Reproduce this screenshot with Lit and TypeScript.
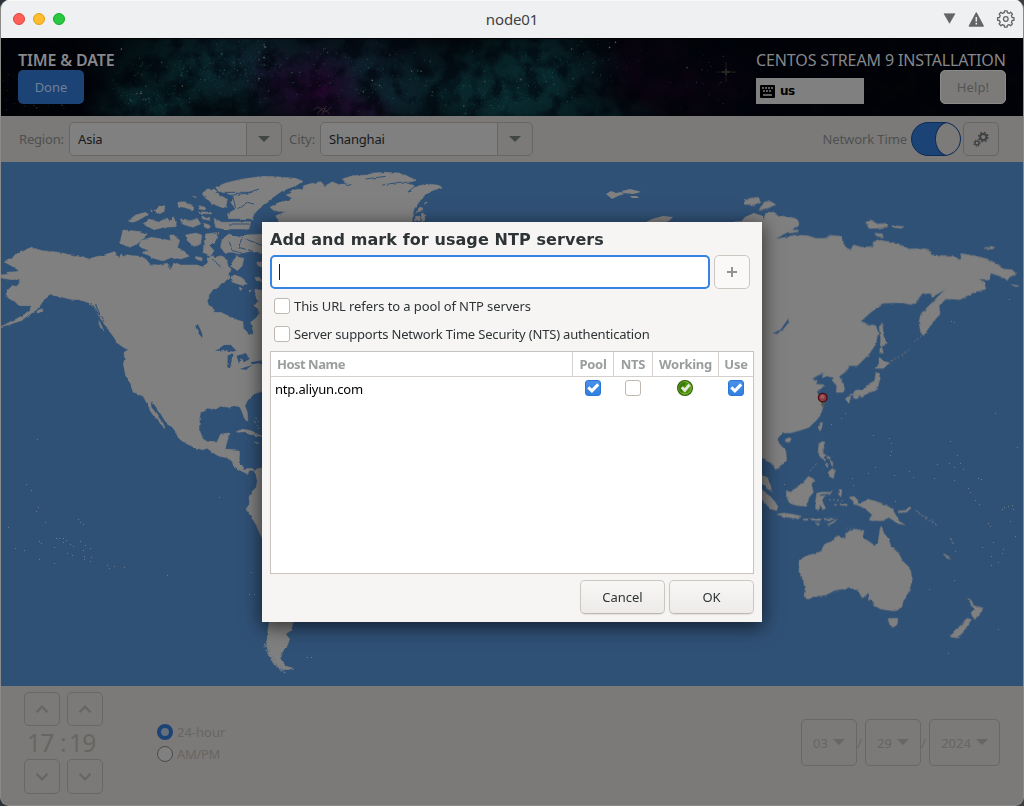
import { LitElement, html, css, svg } from "lit";
import { customElement } from "lit/decorators.js";

/* Deterministic generator used for scattering stars and islets. */
function seeded(seed: number) {
  return () => {
    seed = (seed + 0x6d2b79f5) | 0;
    let t = Math.imul(seed ^ (seed >>> 15), 1 | seed);
    t = (t + Math.imul(t ^ (t >>> 7), 61 | t)) ^ t;
    return ((t ^ (t >>> 14)) >>> 0) / 4294967296;
  };
}

type Star = { x: number; y: number; r: number; c: string; o: number };

const CLUSTERS = [
  [40, 60, 50, 30, 40], [160, 35, 60, 35, 70], [215, 35, 65, 38, 150], [262, 25, 25, 25, 70],
  [150, 62, 40, 14, 60], [325, 30, 70, 38, 90], [400, 32, 40, 25, 60], [370, 55, 30, 20, 40],
  [440, 55, 60, 24, 50], [530, 40, 70, 40, 130], [500, 60, 60, 20, 70], [600, 20, 50, 30, 35],
  [700, 45, 50, 34, 22],
];

function makeStars(): Star[] {
  const rnd = seeded(77);
  const out: Star[] = [];
  for (const [cx, cy, rx, ry, n] of CLUSTERS) {
    for (let i = 0; i < n; i++) {
      const x = cx + (rnd() + rnd() - 1) * rx;
      const y = cy + (rnd() + rnd() - 1) * ry;
      if (y < 1 || y > 77) continue;
      const k = rnd();
      out.push({
        x, y,
        r: k > 0.93 ? 0.8 : 0.5,
        c: k > 0.96 ? "#7f7864" : k > 0.6 ? "#2c6a6e" : "#1a4650",
        o: 0.25 + rnd() * 0.6,
      });
    }
  }
  return out;
}
const STARS = makeStars();

@customElement("star-field")
class StarField extends LitElement {
  static styles = css`
    :host { display: block; width: 100%; height: 100%; }
    svg { display: block; width: 100%; height: 100%; }
  `;
  render() {
    const glow = (x: number, y: number, rx: number, ry: number, c: string, o: number) =>
      svg`<ellipse cx=${x} cy=${y} rx=${rx} ry=${ry} fill=${`url(#${c})`} opacity=${o}></ellipse>`;
    return html`<svg viewBox="0 0 1022 78" preserveAspectRatio="none">
      <defs>
        <radialGradient id="teal"><stop offset="0" stop-color="#0a3035"/><stop offset="1" stop-color="#0a3035" stop-opacity="0"/></radialGradient>
        <radialGradient id="blue"><stop offset="0" stop-color="#0e222e"/><stop offset="1" stop-color="#0e222e" stop-opacity="0"/></radialGradient>
        <radialGradient id="plum"><stop offset="0" stop-color="#22062a"/><stop offset="1" stop-color="#22062a" stop-opacity="0"/></radialGradient>
        <filter id="cloud" x="0" y="0" width="1" height="1" color-interpolation-filters="sRGB">
          <feTurbulence type="fractalNoise" baseFrequency=".05" numOctaves="6" seed="8"/>
          <feColorMatrix values="0 0 0 0 0  0 0 0 0 .01  0 0 0 0 .04  3.4 0 0 0 -1.35"/>
        </filter>
      </defs>
      <rect width="1022" height="78" fill="#010307"/>
      ${glow(205, 34, 125, 75, "teal", 0.8)}
      ${glow(140, 66, 60, 28, "teal", 0.8)}
      ${glow(250, 20, 70, 55, "blue", 0.8)}
      ${glow(360, 35, 120, 70, "blue", 1)}
      ${glow(385, 62, 60, 26, "blue", 0.9)}
      ${glow(460, 50, 90, 50, "teal", 0.7)}
      ${glow(535, 40, 95, 75, "teal", 1)}
      ${glow(500, 70, 80, 35, "teal", 0.6)}
      ${glow(318, 52, 50, 48, "plum", 1)}
      ${glow(275, 45, 32, 42, "plum", 0.6)}
      ${glow(360, 70, 36, 16, "plum", 0.7)}
      ${glow(640, 30, 60, 70, "plum", 0.3)}
      ${glow(705, 50, 75, 50, "plum", 0.25)}
      ${glow(600, 76, 70, 20, "teal", 0.5)}
      <rect width="1022" height="78" filter="url(#cloud)" opacity=".6"/>
      ${STARS.map((s) => svg`<circle cx=${s.x.toFixed(1)} cy=${s.y.toFixed(1)} r=${s.r} fill=${s.c} opacity=${s.o.toFixed(2)}></circle>`)}
      <path d="M312 72q6-5 9 0t9-3M316 76l6-6 7 6M325 68l-4 9" stroke="#4b3f38" stroke-width="1" fill="none" opacity=".55"/>
      <path d="M715 34h20M725 24v20" stroke="#2c3328" stroke-width="1" opacity=".5"/>
      <path d="M721 34h8M725 31v6" stroke="#2c3328" stroke-width="2" opacity=".7"/>
      <rect width="1022" height="1" fill="#000"/>
    </svg>`;
  }
}

const LAND_AMERICA = [
  /* North America down to Panama and the north-west of South America */
  `M15 308L28 300 38 300 50 285 65 275 85 270 97 265 112 270 130 275 165 278 190 282 210 287 240 290 270 300 290 293 310 290 330 283 345 278 352 290 362 293 366 283 372 293 385 287 400 290 425 292 440 300 455 317 480 318 505 313 517 330 525 310 545 318 600 318 612 327 615 318 628 310 622 298 640 290 650 295 665 290 680 300 690 325 697 330 688 345 690 358 665 375 655 385 645 388 630 408 625 425 628 438 640 445 645 460 665 460 690 472 715 483 732 488 733 508 750 525 760 527 760 505 755 490 770 478 780 465 778 450 765 440 775 425 768 405 768 390 800 395 810 690 780 700 765 705 745 725 738 740 745 760 747 785 742 786 735 775 728 755 722 743 705 740 690 745 665 742 650 750 625 748 605 760 602 775 600 810 612 840 625 848 655 847 665 825 690 822 685 845 678 870 710 872 722 878 720 910 733 930 755 928 768 932 790 925 810 925 810 1180 786 1130 770 1095 755 1070 742 1053 742 1040 752 1030 750 1015 755 1002 772 985 775 965 770 945 765 935 752 933 745 945 735 940 720 932 703 920 700 908 688 897 660 892 640 880 625 868 612 872 590 867 560 853 537 838 533 822 520 805 500 788 485 765 470 742 455 726 457 745 472 765 482 780 492 792 497 806 485 795 475 778 462 768 450 745 437 720 425 708 405 700 392 675 380 650 373 615 377 600 375 580 388 572 375 555 345 535 330 515 318 495 305 480 295 460 280 440 265 430 240 422 210 420 180 412 165 410 155 405 140 415 130 430 115 450 95 465 65 485 30 497 5 503 35 488 70 470 90 455 98 440 60 440 50 430 40 425 25 415 18 405 28 388 40 380 52 382 60 375 62 360 40 362 10 358 3 348 30 345 20 340 50 338 60 335 45 325Z`,
  `M345 535l18 8 18 14 8 15-14-6-20-14zM300 485l8 16 6 14-10-10-4-12zM115 455l12-6 6 4-12 8-8 0z`,
  /* Canadian arctic islands */
  `M372 213L400 215 425 218 445 225 430 240 415 255 390 265 362 252Z`,
  `M425 245L455 235 490 240 515 245 512 228 528 228 542 245 535 265 560 280 570 292 545 300 520 295 490 305 460 297 430 280 450 274 430 268 420 260Z`,
  `M388 185L410 168 440 160 445 168 415 185 400 190ZM432 195L450 180 480 190 500 175 510 188 522 173 532 188 530 203 495 205 465 212ZM465 155L480 142 498 140 495 155 475 163ZM535 130L555 128 585 142 580 153 555 145 540 143ZM543 178L575 185 595 178 605 195 580 205 550 195Z`,
  `M560 228L590 222 608 228 605 255 585 262 565 245ZM620 225L660 220 650 245 630 258 645 275 635 290 612 280 615 255ZM597 140L620 145 618 153 600 150ZM645 178L665 190 755 188 750 210 670 210 650 205ZM608 172l25 4-2 8-20-4zM612 192l20 6-4 12-14-8zM590 292l20 6-2 8-18-6zM455 150l6 2-4 4zM580 112l12 2-4 4zM598 158l40 2 0 5-38-2z`,
  `M610 103L625 90 645 90 665 110 685 120 680 145 655 140 630 128Z`,
  `M650 85L680 72 730 60 790 52 830 53 890 58 912 67 890 80 850 95 815 120 795 135 780 150 765 165 760 180 690 180 685 165 710 150 695 130 705 115 680 100 660 100Z`,
  `M670 240L690 225 720 235 740 228 800 225 800 285 760 275 720 285 700 280 675 280 665 262Z`,
  `M695 355L705 345 725 355 745 375 725 378 700 370ZM710 290L735 295 730 320 715 335 695 320ZM773 310l20-2 0 18-16-6zM768 355l14 0 6 10-16 0zM720 385l10 2-6 8zM748 390l8 4-4 6z`,
  /* Greenland */
  `M813 145L840 130 865 125 880 118 862 108 880 92 910 90 910 82 930 75 965 68 980 80 1000 68 1020 77 1040 70 1030 60 1060 50 1105 48 1120 42 1160 40 1200 42 1220 50 1250 62 1230 75 1255 82 1280 75 1315 78 1330 84 1300 95 1280 105 1260 130 1245 150 1240 170 1240 210 850 210 840 190 830 170 860 158 825 155Z`,
  `M1262 145l10 2-8 10-14 2zM1268 162l10 4-2 20-10 0zM1250 172l14 0-4 12-12 0zM1276 130l6 0-4 6z`,
  /* Caribbean */
  `M712 818L730 810 755 815 790 832 770 830 740 818 715 820ZM765 848L782 851 775 854Z`,
  /* Southern cone */
  `M812 1380L884 1382 880 1400 875 1415 860 1425 872 1440 865 1460 850 1475 843 1495 855 1520 884 1528 865 1532 845 1530 825 1515 810 1490 803 1460 806 1420Z`,
];

const LAND_ASIA = [
  `M-60 188L10 185 30 178 35 162 55 157 75 170 110 175 130 180 135 195 110 215 80 230 65 240 90 235 125 228 160 230 185 238 220 238 222 228 260 232 268 250 275 268 290 272 298 258 325 265 357 262 357 250 372 242 410 250 435 255 465 270 500 268 525 272 532 288 570 290 600 290 612 300 622 297 620 284 660 290 700 300 735 318 748 330 770 332 788 343 765 355 760 365 740 352 710 342 705 360 675 360 690 370 695 390 665 398 635 412 618 422 595 420 575 420 555 440 558 465 540 485 525 505 508 530 500 520 495 490 500 465 520 445 555 410 575 390 550 405 535 412 528 403 505 403 485 430 470 437 440 430 385 433 350 460 320 487 340 495 365 500 372 520 365 555 345 585 310 620 285 620 272 640 255 652 265 670 272 690 265 700 247 700 248 680 235 665 235 655 215 650 205 657 208 640 190 650 172 660 190 665 185 675 212 678 188 697 200 720 208 740 202 760 190 780 165 805 135 815 105 822 85 820 70 840 72 850 95 875 98 900 85 915 65 932 55 915 35 900 15 895-60 890Z`,
  `M-30 122L0 116 15 115 18 130 0 137-30 136ZM15 152L30 130 45 125 65 137 40 147Z`,
  `M335 190L350 183 370 195 400 193 400 203 370 208 345 208ZM412 200L450 203 440 208 415 204ZM362 222L385 225 388 233 370 232ZM690 268L710 262 722 265 715 270ZM770 376L795 381 785 383ZM103 216l28-4 2 6-28 4z`,
  `M375 500L385 492 388 530 397 552 382 560 388 582 377 582 380 540ZM375 595L390 605 407 612 385 628 362 628 375 615Z`,
  `M365 640L376 645 375 660 365 695 345 700 325 712 305 705 285 710 305 694 325 692 345 675 362 665ZM275 715L290 712 285 732 275 722ZM298 708L315 705 312 715 298 717Z`,
  /* Hainan, Taiwan, Philippines */
  `M93 842L105 835 112 840 105 850 95 848ZM192 805L200 790 206 792 198 816ZM195 850L208 848 210 865 202 880 215 888 205 900 192 880ZM222 940L235 928 243 935 238 958 225 952ZM205 898l10 2-2 6zM218 890l10 6-6 6zM212 912l10 2-2 12zM226 902l10 4 0 16-8-8z`,
  /* Malaya, Sumatra, Borneo, Java, Sulawesi */
  `M0 930L22 945 40 955 50 980 52 995 40 990 22 970ZM0 970L22 990 40 1005 60 1025 70 1040 68 1055 50 1050 22 1020ZM97 995L110 1000 125 985 148 970 163 952 182 962 172 975 178 1000 165 1015 155 1042 120 1038 105 1030 97 1012ZM68 1065L90 1062 120 1067 142 1072 130 1078 95 1074ZM148 1079l14 1-2 4-12-1zM168 1079l34 1-4 5-28-2zM208 1078l34 0-10 4-24 0zM220 1097L250 1080 240 1090 224 1098ZM183 1090l14 3-4 4z`,
  `M188 1003L200 999 230 1000 234 994 230 1004 200 1005 195 1012 212 1010 203 1025 215 1048 205 1052 198 1035 192 1052 185 1050 185 1025ZM256 988l8 6-4 20-6-8zM258 1034l22 2-2 4-20-2zM240 1036l8 1-2 3z`,
  /* New Guinea and neighbours */
  `M285 1015L300 1012 312 1025 310 1035 325 1030 340 1020 365 1028 395 1038 415 1050 425 1068 435 1085 450 1097 430 1093 405 1075 385 1085 365 1085 345 1080 355 1068 335 1050 315 1040 298 1035 300 1028ZM432 1056L455 1054 466 1043 468 1050 458 1059 436 1061Z`,
  `M567 1183l12 7 11 11-10-5-12-10zM484 1055l10 6M498 1066l10 6M512 1072l10 4M528 1080l8 6M542 1092l6 6`,
  /* Australia, Tasmania, New Zealand */
  `M135 1205L150 1193 200 1178 212 1155 232 1148 250 1128 262 1138 275 1135 275 1122 298 1110 330 1115 325 1135 345 1148 362 1160 372 1150 378 1110 382 1100 390 1125 402 1135 410 1160 435 1185 445 1205 468 1228 475 1260 465 1295 448 1325 443 1345 415 1355 380 1350 362 1340 350 1320 343 1325 345 1300 325 1317 310 1292 285 1285 240 1295 215 1308 180 1312 165 1320 150 1312 153 1290 148 1265 135 1238Z`,
  `M402 1378L432 1378 428 1398 415 1405 405 1390ZM640 1315L655 1330 658 1340 687 1347 675 1365 662 1382 650 1360 660 1350ZM638 1377L652 1382 640 1400 622 1425 605 1437 588 1430 605 1412 625 1395Z`,
];

/* Islets: x, y in window pixels. */
const SPECKS = [
  [37, 439], [26, 484], [31, 490], [38, 507], [36, 511], [45, 522], [8, 527], [78, 519], [80, 522], [83, 524], [15, 548], [24, 550], [39, 541],
  [41, 543], [54, 547], [56, 538], [59, 538], [63, 538], [66, 540], [63, 542], [70, 544], [73, 546], [80, 541], [85, 545], [90, 548], [83, 550],
  [67, 553], [72, 555], [84, 556], [91, 557], [84, 559], [90, 561], [54, 563], [39, 559], [107, 565], [109, 568], [114, 566], [124, 567], [167, 575],
  [219, 497], [251, 572], [249, 594], [254, 594], [307, 657], [311, 657],
  [845, 413], [841, 418], [831, 424], [995, 413], [873, 435], [889, 438], [891, 443], [891, 451], [890, 455], [950, 441], [957, 455], [1017, 447],
  [875, 467], [868, 473], [894, 475], [909, 471], [913, 477], [934, 478], [937, 464], [949, 463], [954, 467], [960, 463], [963, 469], [954, 480],
  [978, 478], [981, 479], [968, 488], [970, 492], [975, 500], [979, 504], [895, 501], [1004, 507], [1008, 506], [1012, 505], [1013, 509], [1002, 509],
  [988, 523], [990, 526], [1010, 521], [1015, 536], [993, 542], [1003, 549], [1002, 553], [982, 547], [991, 556], [998, 562], [991, 565], [951, 539],
  [953, 543], [955, 551], [954, 580], [929, 589], [998, 629], [948, 653], [852, 478], [853, 485], [784, 484], [1009, 299], [951, 321], [954, 322],
];

function southernFjords() {
  const rnd = seeded(5);
  return Array.from({ length: 46 }, (_, i) => {
    const t = i / 46;
    return [263 + t * t * 20 + rnd() * 5, 640 + t * 31 + rnd() * 2, 1 + rnd() * 0.6];
  });
}

@customElement("world-map")
class WorldMap extends LitElement {
  static styles = css`
    :host { display: block; }
    svg { display: block; width: 100%; height: 100%; }
    .sea { fill: #305176; }
    .land { fill: #808080; stroke: #808080; stroke-width: 1.5; }
    .lake { fill: #305176; }
    .cut { fill: none; stroke: #305176; stroke-width: 3; }
    .trail { fill: none; stroke: #808080; stroke-width: 3; stroke-dasharray: 5 7; }
  `;
  render() {
    return html`<svg viewBox="1 162 1022 524">
      <defs>
        <filter id="coast" filterUnits="userSpaceOnUse" x="0" y="160" width="1024" height="528">
          <feTurbulence type="fractalNoise" baseFrequency=".22" numOctaves="2" seed="3"/>
          <feDisplacementMap in="SourceGraphic" scale="3.500" xChannelSelector="R" yChannelSelector="G" color-interpolation-filters="sRGB"/>
        </filter>
      </defs>
      <rect class="sea" x="0" y="160" width="1024" height="528"/>
      <g filter="url(#coast)">
        <g transform="translate(0 160) scale(.33333)">
          <g class="land">${LAND_AMERICA.map((d) => svg`<path d=${d}></path>`)}</g>
          <path class="cut" d="M650 100h100l30-10M690 110l70-10M700 110l10 35M715 150l30-20 20 5M1150 78l50-8h45M1225 100l30-24M970 68l10 16M1005 68l50 10M1100 60l60-8M690 245l10 30 30 8M730 235l-12 30 40 10M740 240l50 20M275 432l20 25 20 30M290 435l12 30M670 181h90M690 195h60M655 210v80M640 300l25 25M505 318l10 14"/>
          <path class="lake" d="M588 500L597 495 610 525 610 537 600 525ZM648 577L675 558 695 557 712 575 700 578 675 572ZM686 590L700 583 698 605 693 628 685 625ZM713 590L740 582 752 600 735 610 725 598 720 615ZM722 630L760 618 740 632ZM755 610L788 604 785 612 758 616Z"/>
          <path class="trail" d="M765 785l15 25M770 775l12 20"/>
        </g>
        <g transform="translate(755 160) scale(.33333)">
          <g class="land">${LAND_ASIA.map((d) => svg`<path d=${d}></path>`)}</g>
          <path class="lake" d="M55 523L80 512 95 490 104 477 102 492 88 510 65 525Z"/>
          <path class="trail" d="M410 606L465 573M480 550l22-20M168 936l20-22M484 1055l64 44M275 1108l24-1M588 1136l10 20M225 1022l45 2"/>
        </g>
      </g>
      <path fill="#808080" d="M606 194l5-3 5 2 5-1 3 2-6 2-6 3zM622 191l8-2 8 2 3 1-8 2-10-1zM630 196l7 0 2 2-7 0zM646 222l6-3 11-3 10 1-4 4-6 2zM741 222l4-5 9-4 9 3v6z"/>
      <g fill="#707a83">
        ${SPECKS.map(([x, y]) => svg`<rect x=${x} y=${y} width="1" height="1"></rect>`)}
        ${southernFjords().map(([x, y, w]) => svg`<rect x=${x} y=${y} width=${w} height=${w}></rect>`)}
      </g>
      <g>
        <path d="M821.300 401h3.200v4l-1.600 2.500-1.600-2.500z" fill="#55564e"/>
        <circle cx="822.700" cy="397.600" r="4.300" fill="#8c3c42" stroke="#4a0c12" stroke-width="1.300"/>
        <circle cx="822.400" cy="396.800" r="2" fill="#a2595d"/>
      </g>
    </svg>`;
  }
}

const chevron = (up: boolean) => html`<svg width="14" height="10" viewBox="0 0 14 10"><path d=${up ? "M1.500 8.200L7 2.600 12.500 8.200" : "M1.500 1.800L7 7.400 12.500 1.800"} fill="none" stroke="#686562" stroke-width="2.300"/></svg>`;
const caret = (c: string) => html`<svg width="12" height="6" viewBox="0 0 12 6"><path d="M0 0h12L6 6z" fill=${c}/></svg>`;

function gearPath(cx: number, cy: number, teeth: number, ro: number, ri: number) {
  const p: string[] = [];
  const step = (Math.PI * 2) / teeth;
  for (let i = 0; i < teeth; i++) {
    const a = i * step;
    for (const [k, r] of [[-0.3, ri], [-0.2, ro], [0.2, ro], [0.3, ri]] as const)
      p.push(`${(cx + Math.sin(a + k * step) * r).toFixed(2)} ${(cy - Math.cos(a + k * step) * r).toFixed(2)}`);
  }
  return `M${p.join("L")}Z`;
}

@customElement("check-mark")
class CheckMark extends LitElement {
  static properties = { on: { type: Boolean } };
  declare on: boolean;
  static styles = css`
    :host { display: block; width: 16px; height: 16px; }
    .box { box-sizing: border-box; width: 16px; height: 16px; border: 1px solid #bfb8b1; border-radius: 3px; background: #fff; }
    .on { border-color: #2a76d8; background: linear-gradient(#4a90e8, #3180df); display: flex; align-items: center; justify-content: center; }
    svg { display: block; flex: none; }
  `;
  render() {
    return this.on
      ? html`<div class="box on"><svg width="14" height="14" viewBox="0 0 14 14"><path d="M2.300 6.400L5.900 9.800 12.200 3.400" fill="none" stroke="#fff" stroke-width="3"/></svg></div>`
      : html`<div class="box"></div>`;
  }
}

@customElement("ntp-dialog")
class NtpDialog extends LitElement {
  static styles = css`
    :host { display: flex; flex-direction: column; box-sizing: border-box; width: 500px; height: 400px; padding: 8px 8px 8px; background: #f6f5f4; color: #2e3436; box-shadow: 0 4px 18px 1px rgba(0, 0, 0, .62); letter-spacing: -.1px; }
    h1 { margin: 0; font: bold 16px/20px "DejaVu Sans", sans-serif; letter-spacing: .08px; height: 25px; }
    .entry { display: flex; gap: 4px; height: 34px; }
    .input { flex: none; box-sizing: border-box; width: 440px; border: 2px solid #3584e4; border-radius: 5px; background: #fff; display: flex; align-items: center; padding-left: 7px; }
    .cursor { width: 1px; height: 16px; background: #1c1f20; }
    .add { box-sizing: border-box; width: 36px; border: 1px solid #cdc7c2; border-radius: 5px; background: #faf9f8; display: flex; align-items: center; justify-content: center; }
    .opt { display: flex; align-items: center; gap: 4px; height: 16px; padding-left: 4px; margin-top: 9px; }
    .opt + .opt { margin-top: 12px; }
    .o2 { letter-spacing: -.18px; }
    .table { margin-top: 9px; box-sizing: border-box; height: 223px; width: 484px; border: 1px solid #c8c3be; background: #fff; }
    .head, .row { display: grid; grid-template-columns: 301px 41px 39px 66px 35px; }
    .head { height: 24px; border-bottom: 1px solid #d5d0cc; font-weight: bold; color: #9a9d9d; line-height: 25px; letter-spacing: -.5px; text-align: center; }
    .head span + span { border-left: 1px solid #d5d0cc; letter-spacing: -.28px; }
    .head span:first-child { text-align: left; padding-left: 6px; }
    .row { height: 24px; align-items: center; justify-items: center; }
    .row span { justify-self: start; padding: 0 0 0 4px; color: #000; letter-spacing: -.2px; }
    .row > :not(span) { margin-top: -3px; }
    .actions { display: flex; justify-content: flex-end; gap: 4px; margin-top: 6px; }
    .btn { box-sizing: border-box; width: 85px; height: 34px; border: 1px solid #cdc7c2; border-bottom-color: #bfb8b1; border-radius: 5px; background: linear-gradient(#f8f7f6, #edebe9); box-shadow: 0 1px 1px rgba(0, 0, 0, .08); display: flex; align-items: center; justify-content: center; letter-spacing: 0; }
    svg { display: block; }
  `;
  render() {
    return html`
      <h1>Add and mark for usage NTP servers</h1>
      <div class="entry">
        <div class="input"><div class="cursor"></div></div>
        <div class="add"><svg width="10" height="10" viewBox="0 0 10 10"><path d="M5 0v10M0 5h10" stroke="#929595" stroke-width="2"/></svg></div>
      </div>
      <div class="opt"><check-mark></check-mark><span>This URL refers to a pool of NTP servers</span></div>
      <div class="opt"><check-mark></check-mark><span class="o2">Server supports Network Time Security (NTS) authentication</span></div>
      <div class="table">
        <div class="head"><span>Host Name</span><span>Pool</span><span>NTS</span><span>Working</span><span>Use</span></div>
        <div class="row">
          <span>ntp.aliyun.com</span>
          <check-mark on></check-mark>
          <check-mark></check-mark>
          <svg width="16" height="16" viewBox="0 0 16 16">
            <circle cx="8" cy="8" r="7.400" fill="#4e9206" stroke="#2f5f04" stroke-width="1.200"/>
            <circle cx="8" cy="8" r="6.200" fill="none" stroke="#8fc45a" stroke-width=".9"/>
            <path d="M9 2a6 6 0 0 0-4.500 11z" fill="#2f6a04" opacity=".6"/>
            <path d="M4.800 7.200L7.800 10.200 12.500 4.800" fill="none" stroke="#e6e6e0" stroke-width="3"/>
          </svg>
          <check-mark on></check-mark>
        </div>
      </div>
      <div class="actions"><div class="btn">Cancel</div><div class="btn">OK</div></div>`;
  }
}

@customElement("app-root")
class AppRoot extends LitElement {
  static styles = css`
    :host { display: block; position: relative; width: 1024px; height: 806px; overflow: hidden; background: linear-gradient(90deg, #2b333a, #3b3d40); font: 13px/18px "Noto Sans", sans-serif; }
    .window { box-sizing: border-box; width: 1024px; height: 806px; border-radius: 9px; overflow: hidden; display: flex; flex-direction: column; background: #7b7a78; border: solid #8a8a89; border-width: 0 1px 1px; }
    .bar { height: 38px; flex: none; margin: 0 -1px; display: grid; grid-template-columns: 1fr auto 1fr; align-items: center; background: #eff0f2; box-shadow: inset 0 1px #f7f8f9; color: #404143; font-size: 15px; letter-spacing: -.15px; }
    .lights { display: flex; gap: 8px; padding-left: 13px; }
    .light { box-sizing: border-box; width: 12px; height: 12px; border-radius: 50%; }
    .red { background: #ff5f57; border: 1px solid #e2463f; }
    .amber { background: #febc2e; border: 1px solid #e1a116; }
    .green { background: #28c840; border: 1px solid #12ac28; }
    .tools { display: flex; align-items: center; justify-content: flex-end; padding-right: 9px; }
    .tools svg { display: block; }
    .banner { height: 78px; flex: none; display: grid; }
    .banner > * { grid-area: 1 / 1; min-width: 0; }
    .heads { display: flex; justify-content: space-between; padding: 12px 17px 0; z-index: 1; color: #87888b; font-size: 16px; line-height: 20px; }
    .left b { display: block; font-weight: 600; letter-spacing: -.15px; }
    .right { width: 250px; letter-spacing: -.12px; white-space: nowrap; }
    .done, .help { box-sizing: border-box; width: 66px; height: 34px; border-radius: 5px; display: flex; align-items: center; justify-content: center; font-size: 13px; }
    .done { background: #1b4375; color: #6f8099; }
    .help { background: #7c7b79; border: 1px solid #8a8a88; letter-spacing: .1px; color: #535454; }
    .sub { display: flex; justify-content: space-between; }
    .kbd { box-sizing: border-box; display: flex; align-items: center; gap: 5px; width: 108px; height: 26px; margin-top: 8px; padding-left: 4px; background: #808080; color: #000; font: bold 12px/26px "DejaVu Sans", sans-serif; letter-spacing: -.5px; }
    .filters { box-sizing: border-box; height: 46px; flex: none; display: flex; align-items: center; padding: 0 24px 0 18px; color: #4e5051; letter-spacing: -.18px; }
    .combo { box-sizing: border-box; width: 213px; height: 34px; border: 1px solid #686562; border-radius: 5px; display: flex; color: #171a1b; overflow: hidden; background: #7b7a78; }
    .combo div { flex: 1; display: flex; align-items: center; padding-left: 8px; background: #808080; }
    .combo i { width: 34px; border-left: 1px solid #686562; display: flex; align-items: center; justify-content: center; }
    .l1 { width: 50px; } .l2 { width: 31px; margin-left: 7px; letter-spacing: -.05px; }
    .nt { margin-left: auto; padding-right: 4px; letter-spacing: -.1px; }
    .switch { box-sizing: border-box; width: 50px; height: 34px; border: 1px solid #0f2d55; border-radius: 17px; background: #1b4375; display: flex; justify-content: flex-end; overflow: hidden; }
    .knob { box-sizing: border-box; width: 26px; height: 34px; margin-top: -1px; margin-right: -1px; border: 1px solid #0f2d55; border-radius: 50%; background: #7c7b79; }
    .gear { box-sizing: border-box; width: 36px; height: 34px; margin-left: 2px; border: 1px solid #686562; border-radius: 5px; display: flex; align-items: center; justify-content: center; }
    world-map { width: 1022px; height: 524px; flex: none; }
    .foot { flex: 1; display: flex; align-items: flex-start; padding: 6px 23px 0; color: #686562; }
    .time { display: grid; grid-template-columns: 36px 36px; column-gap: 7px; width: 79px; }
    .spin { box-sizing: border-box; height: 34px; border: 1px solid #696663; border-radius: 5px; display: flex; align-items: center; justify-content: center; }
    .low { height: 35px; }
    .digits { grid-column: 1 / 3; display: flex; height: 33px; font-size: 24.500px; line-height: 34px; letter-spacing: -.8px; }
    .digits span { box-sizing: border-box; width: 36px; padding-left: 3px; }
    .digits .sep { width: 6px; padding-left: 0; }
    .radios { padding: 32px 0 0 54px; }
    .radio { display: flex; align-items: center; gap: 4px; height: 16px; margin-bottom: 6px; }
    .dot { box-sizing: border-box; width: 16px; height: 16px; border-radius: 50%; border: 1px solid #4c4a47; background: #808080; }
    .dot.sel { border: 4px solid #1b4375; background: #65707d; }
    .pm { letter-spacing: -.3px; }
    .date { margin-left: auto; display: flex; padding-top: 27px; line-height: 48px; }
    .pick { box-sizing: border-box; width: 56px; height: 47px; border: 1px solid #696663; border-radius: 5px; display: flex; align-items: center; justify-content: center; gap: 5px; }
    .pick svg { margin-top: -2px; }
    .year { width: 71px; }
    .slash { width: 8px; box-sizing: border-box; padding-left: 0; }
    svg { display: block; }
    ntp-dialog { position: absolute; left: 262px; top: 222px; }
  `;
  combo(v: string) {
    return html`<div class="combo"><div>${v}</div><i>${caret("#434647")}</i></div>`;
  }
  render() {
    return html`
      <div class="window">
        <div class="bar">
          <div class="lights"><div class="light red"></div><div class="light amber"></div><div class="light green"></div></div>
          <div>node01</div>
          <div class="tools">
            <svg width="80" height="20" viewBox="0 0 80 20">
              <path d="M9 4.700h11L14.500 14.300z" fill="#636466" stroke="#636466" stroke-width=".6"/>
              <path d="M41.300 4L48.200 17H34.400z" fill="#636466" stroke="#636466" stroke-width="1.400" stroke-linejoin="round"/>
              <path d="M41.300 8v4.500M41.300 13.700v1.700" stroke="#eff0f2" stroke-width="1.500"/>
              <path d=${gearPath(70.8, 10, 8, 8.3, 6.5)} fill="none" stroke="#636466" stroke-width="1.300" stroke-linejoin="round"/>
              <circle cx="70.800" cy="10" r="2.300" fill="none" stroke="#636466" stroke-width="1.300"/>
            </svg>
          </div>
        </div>
        <div class="banner">
          <star-field></star-field>
          <div class="heads">
            <div class="left"><b>TIME &amp; DATE</b><div class="done">Done</div></div>
            <div class="right">CENTOS STREAM 9 INSTALLATION
              <div class="sub">
                <div class="kbd">
                  <svg width="15" height="13" viewBox="0 0 15 13"><rect width="15" height="13" rx="1" fill="#000"/><path d="M2 3h2M5 3h2M8 3h2M11 3h2M3 6h2M6 6h2M9 6h2M3 10h9" stroke="#808080" stroke-width="1.600"/></svg>
                  us
                </div>
                <div class="help">Help!</div>
              </div>
            </div>
          </div>
        </div>
        <div class="filters">
          <span class="l1">Region:</span>${this.combo("Asia")}
          <span class="l2">City:</span>${this.combo("Shanghai")}
          <span class="nt">Network Time</span>
          <div class="switch"><div class="knob"></div></div>
          <div class="gear">
            <svg width="16" height="16" viewBox="0 0 16 16" fill="none" stroke="#3e4142">
              <circle cx="10.300" cy="6" r="3.100" stroke-width="2"/>
              <circle cx="10.300" cy="6" r="4.700" stroke-width="1.400" stroke-dasharray="1.850 1.840"/>
              <circle cx="4" cy="12" r="1.900" stroke-width="1.300"/>
              <circle cx="4" cy="12" r="3.100" stroke-width="1.200" stroke-dasharray="1.200 1.230"/>
            </svg>
          </div>
        </div>
        <world-map></world-map>
        <div class="foot">
          <div class="time">
            <div class="spin">${chevron(true)}</div><div class="spin">${chevron(true)}</div>
            <div class="digits"><span>17</span><span class="sep">:</span><span>19</span></div>
            <div class="spin low">${chevron(false)}</div><div class="spin low">${chevron(false)}</div>
          </div>
          <div class="radios">
            <div class="radio"><div class="dot sel"></div>24-hour</div>
            <div class="radio pm"><div class="dot"></div>AM/PM</div>
          </div>
          <div class="date">
            <div class="pick">03 ${caret("#686562")}</div><span class="slash">/</span>
            <div class="pick">29 ${caret("#686562")}</div><span class="slash">/</span>
            <div class="pick year">2024 ${caret("#686562")}</div>
          </div>
        </div>
      </div>
      <ntp-dialog></ntp-dialog>`;
  }
}
